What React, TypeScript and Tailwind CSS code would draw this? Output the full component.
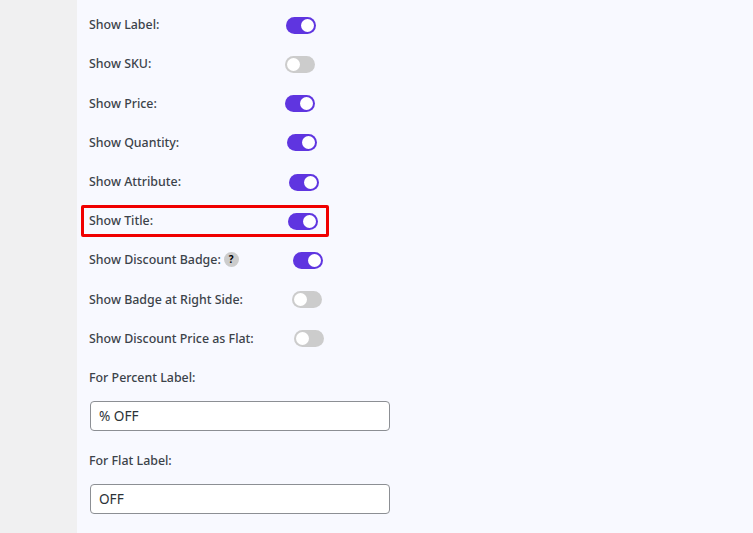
const rows: { label: string; on: boolean; offset: string; help?: boolean; box?: boolean }[] = [
  { label: "Show Label:", on: true, offset: "ml-[197px]" },
  { label: "Show SKU:", on: false, offset: "ml-[196px]" },
  { label: "Show Price:", on: true, offset: "ml-[196px]" },
  { label: "Show Quantity:", on: true, offset: "ml-[198px]" },
  { label: "Show Attribute:", on: true, offset: "ml-[200px]" },
  { label: "Show Title:", on: true, offset: "ml-[199px]", box: true },
  { label: "Show Discount Badge:", on: true, offset: "ml-[204px]", help: true },
  { label: "Show Badge at Right Side:", on: false, offset: "ml-[203px]" },
  { label: "Show Discount Price as Flat:", on: false, offset: "ml-[205px]" },
];

function Toggle({ on, offset }: { on: boolean; offset: string }) {
  return (
    <span
      className={`${offset} flex h-[17px] w-[30px] shrink-0 items-center rounded-full px-[2px] ${
        on ? "justify-end bg-[#5f35e0]" : "justify-start bg-[#cccccc]"
      }`}
    >
      <span className="h-[13px] w-[13px] rounded-full bg-white" />
    </span>
  );
}

function Field({ label, value }: { label: string; value: string }) {
  return (
    <div>
      <div className="flex h-[38px] items-center pl-[12px] text-[12.4px] font-medium text-[#3c434a]">{label}</div>
      <div className="mt-[4px] ml-[13px] flex h-[30px] w-[300px] items-center rounded-[4px] border border-[#8c8f94] bg-white px-[8px] text-[13.6px] text-[#2c3338]">
        {value}
      </div>
    </div>
  );
}

export default function App() {
  return (
    <div className="flex h-[533px] w-[753px] overflow-hidden bg-[#f0f0f1] font-['Noto_Sans',sans-serif]">
      <div className="w-[77px] shrink-0" />
      <main className="flex-1 bg-[#f8f9ff] pt-[5.8px]">
        {rows.map((r) => (
          <div key={r.label} className="relative flex h-[39.2px] items-center pl-[12px] text-[12.4px] font-medium text-[#3c434a]">
            <span className="relative top-[-0.6px] h-[17px] w-0">
              <span className="absolute left-0 top-0 flex items-center whitespace-nowrap leading-[17px]">
                {r.label}
                {r.help && (
                  <span className="ml-[3px] flex h-[15px] w-[15px] items-center justify-center rounded-full bg-[#cccccc] text-[10px] font-bold text-black">
                    ?
                  </span>
                )}
              </span>
            </span>
            <Toggle on={r.on} offset={r.offset} />
            {r.box && (
              <span className="absolute left-[4px] top-[3.6px] h-[32px] w-[248px] rounded-[2px] border-[3px] border-[#f00000]" />
            )}
          </div>
        ))}
        <div className="mt-[0.6px]">
          <Field label="For Percent Label:" value="% OFF" />
        </div>
        <div className="mt-[11px]">
          <Field label="For Flat Label:" value="OFF" />
        </div>
      </main>
    </div>
  );
}
